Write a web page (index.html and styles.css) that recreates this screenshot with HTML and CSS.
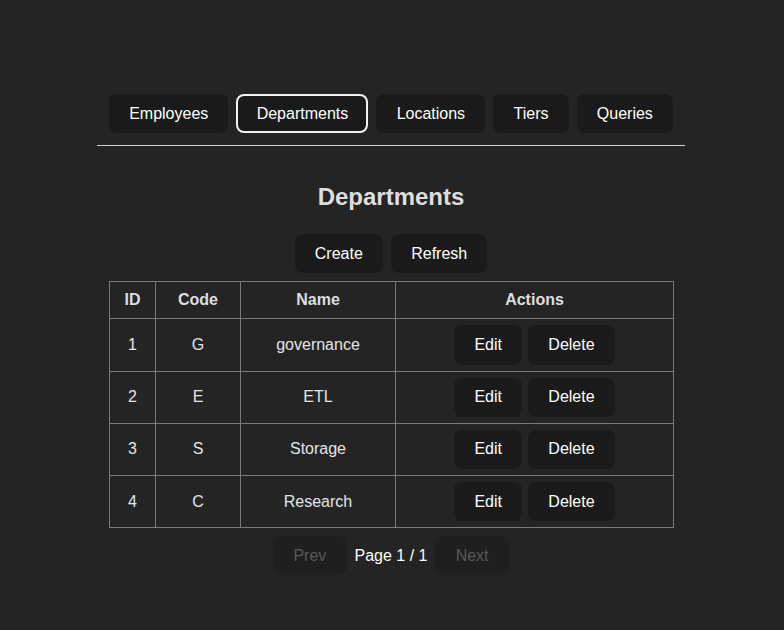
FILE: index.html
```html
<!DOCTYPE html>
<html lang="en">
<head>
<meta charset="utf-8">
<title>Departments</title>
<link rel="stylesheet" href="styles.css">
</head>
<body>
<div class="app">
  <nav class="tabs">
    <button class="btn">Employees</button>
    <button class="btn active">Departments</button>
    <button class="btn">Locations</button>
    <button class="btn">Tiers</button>
    <button class="btn">Queries</button>
  </nav>
  <hr class="divider">
  <h2 class="title">Departments</h2>
  <div class="toolbar">
    <button class="btn">Create</button>
    <button class="btn">Refresh</button>
  </div>
  <table class="grid">
    <colgroup>
      <col class="c-id"><col class="c-code"><col class="c-name"><col class="c-act">
    </colgroup>
    <thead>
      <tr><th>ID</th><th>Code</th><th>Name</th><th>Actions</th></tr>
    </thead>
    <tbody>
      <tr><td>1</td><td>G</td><td>governance</td><td class="act"><div class="acts"><button class="btn">Edit</button><button class="btn">Delete</button></div></td></tr>
      <tr><td>2</td><td>E</td><td>ETL</td><td class="act"><div class="acts"><button class="btn">Edit</button><button class="btn">Delete</button></div></td></tr>
      <tr><td>3</td><td>S</td><td>Storage</td><td class="act"><div class="acts"><button class="btn">Edit</button><button class="btn">Delete</button></div></td></tr>
      <tr><td>4</td><td>C</td><td>Research</td><td class="act"><div class="acts"><button class="btn">Edit</button><button class="btn">Delete</button></div></td></tr>
    </tbody>
  </table>
  <div class="pager">
    <button class="btn" disabled>Prev</button>
    <span class="page">Page 1 / 1</span>
    <button class="btn" disabled>Next</button>
  </div>
</div>
</body>
</html>
```
FILE: styles.css
```css
html, body {
  margin: 0;
  background: #242424;
}
body {
  padding: 0 2px 0 0;
  font-family: "Liberation Sans", Arial, sans-serif;
  font-size: 16px;
  color: rgba(255, 255, 255, 0.87);
}
.app {
  width: 588px;
  margin: 0 auto;
  padding-top: 94px;
}
.btn {
  font-family: inherit;
  font-size: 16px;
  line-height: normal;
  padding: 0.6em 1.2em;
  border: 1px solid transparent;
  border-radius: 8px;
  background: #1a1a1a;
  color: #fff;
  cursor: pointer;
}
.btn.active {
  border: 2px solid #f2f2f2;
  padding: calc(0.6em - 1px) calc(1.2em - 1px);
}
.btn:disabled {
  background: #1f1f1f;
  color: #595959;
  cursor: default;
}
.tabs {
  display: flex;
  justify-content: center;
  gap: 8px;
}
.divider {
  margin: 12px 0 0;
  border: 0;
  border-top: 1px solid #d0d0d0;
  height: 0;
}
.title {
  margin: 37px 0 0;
  font-size: 24px;
  line-height: 28px;
  font-weight: bold;
  text-align: center;
  color: #dedede;
}
.toolbar {
  display: flex;
  justify-content: center;
  gap: 8px;
  margin-top: 23px;
}
.grid {
  margin: 8px 0 0 12px;
  border-collapse: collapse;
  table-layout: fixed;
  width: 564px;
  color: #e4e4e4;
}
.c-id { width: 46px; }
.c-code { width: 85px; }
.c-name { width: 155px; }
.c-act { width: 278px; }
.grid th, .grid td {
  border: 1px solid #7a7a7a;
  text-align: center;
  padding: 0;
}
.grid th {
  height: 36px;
  font-weight: bold;
  color: #dedede;
}
.grid td.act {
  padding: 6px 0;
}
.acts {
  display: flex;
  justify-content: center;
  gap: 6px;
}
.pager {
  display: flex;
  justify-content: center;
  align-items: center;
  gap: 8px;
  margin-top: 8px;
}
.page {
  color: #fff;
}
```
